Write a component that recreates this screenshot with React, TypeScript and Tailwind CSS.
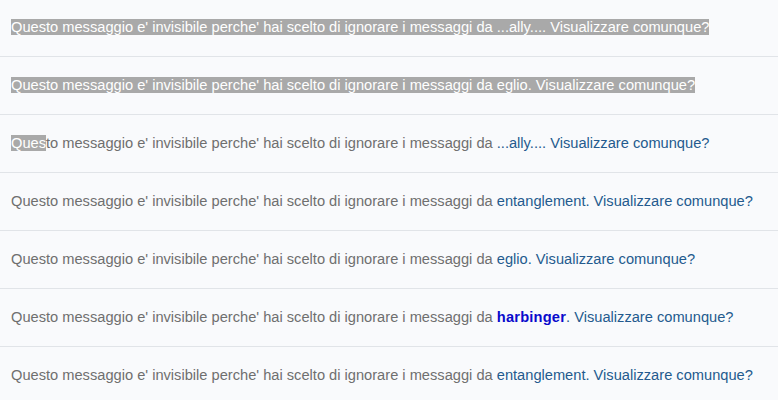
import React from 'react';

type Row = {
    user: string;
    bold?: boolean;
    selected?: 'all' | 'partial';
};

const rows: Row[] = [
    { user: '...ally...', selected: 'all' },
    { user: 'eglio', selected: 'all' },
    { user: '...ally...', selected: 'partial' },
    { user: 'entanglement' },
    { user: 'eglio' },
    { user: 'harbinger', bold: true },
    { user: 'entanglement' },
];

const PREFIX = "Questo messaggio e' invisibile perche' hai scelto di ignorare i messaggi da ";

const HiddenRow = ({ row }: { row: Row }) => {
    if (row.selected === 'all') {
        return (
            <div className="h-[58px] border-b border-[#e1e4e8] pl-[11px] pt-[20px] leading-[17px]">
                <span className="bg-[#a9a9a9] text-white">
                    {PREFIX}{row.user}. Visualizzare comunque?
                </span>
            </div>
        );
    }

    return (
        <div className="h-[58px] border-b border-[#e1e4e8] pl-[11px] pt-[20px] leading-[17px] text-[#6f6f6f]">
            {row.selected === 'partial' ? (
                <>
                    <span className="bg-[#a9a9a9] text-white">Ques</span>
                    {PREFIX.slice(4)}
                </>
            ) : (
                PREFIX
            )}
            <span className={row.bold ? 'font-bold tracking-[0.2px] text-[#0a0acc]' : 'text-[#245a8e]'}>{row.user}</span>
            <span className="text-[#245a8e]">. Visualizzare comunque?</span>
        </div>
    );
};

export default function App() {
    return (
        <div className="h-[400px] w-[778px] overflow-hidden bg-[#f9fafc] font-['Liberation_Sans',Arial,sans-serif] text-[14.65px]">
            <div className="-mt-px">
                {rows.map((row, i) => (
                    <HiddenRow key={i} row={row} />
                ))}
            </div>
        </div>
    );
}
